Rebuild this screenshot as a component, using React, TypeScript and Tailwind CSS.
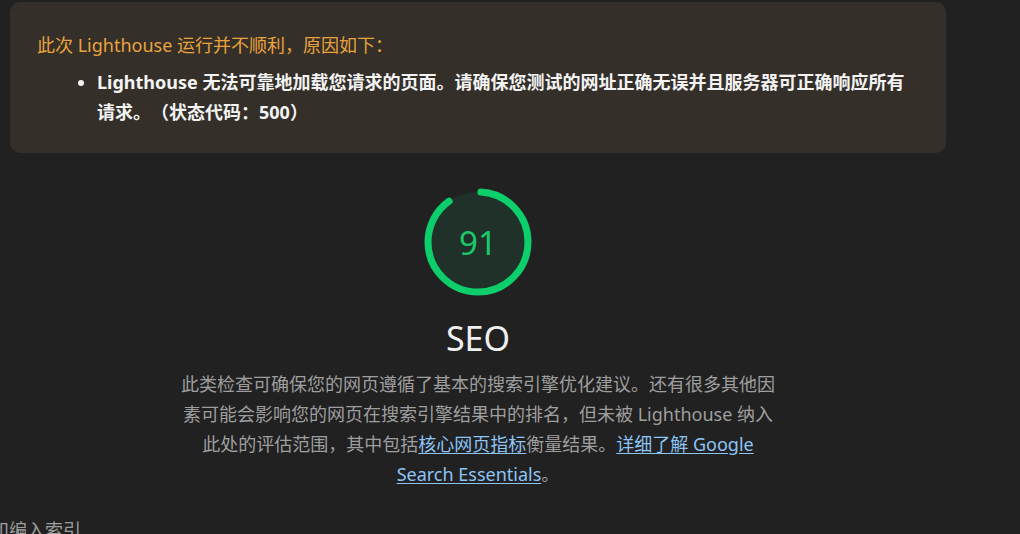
import React from 'react';

const FONT = '"Noto Sans", "Noto Sans CJK SC", sans-serif';

function ScoreGauge({ score }: { score: number }) {
  const r = 50;
  const circ = 2 * Math.PI * r;
  const len = (score / 100) * circ;
  return (
    <svg width="108" height="108" viewBox="0 0 108 108" className="block">
      <circle cx="54" cy="54" r={r} fill="#1f3129" stroke="none" />
      <circle
        cx="54"
        cy="54"
        r={r}
        fill="none"
        stroke="#0ccf6b"
        strokeWidth="7"
        strokeLinecap="round"
        strokeDasharray={`${len - 6} ${circ}`}
        strokeDashoffset={-3}
        transform="rotate(-90 54 54)"
      />
      <text
        x="54"
        y="54"
        textAnchor="middle"
        dominantBaseline="central"
        fill="#1cc86a"
        fontSize="33"
        style={{ fontFamily: FONT }}
      >
        {score}
      </text>
    </svg>
  );
}

export default function App() {
  return (
    <div
      className="w-[1020px] h-[534px] overflow-hidden bg-[#212121] text-[18px] leading-[30px] [text-spacing-trim:space-all]"
      style={{ fontFamily: FONT }}
    >
      <div className="w-[956px] flex flex-col items-center">
        {/* warning card */}
        <div className="mt-[2px] w-[936px] h-[151px] rounded-[10px] bg-[#342f29] pl-[27px] pt-[28px]">
          <div className="text-[#eaa33c]">此次 Lighthouse 运行并不顺利，原因如下：</div>
          <ul className="mt-[7px] list-disc pl-[60px] text-[#f3f3f3] font-bold">
            <li className="pr-[30px]">
              Lighthouse 无法可靠地加载您请求的页面。请确保您测试的网址正确无误并且服务器可正确响应所有请求。（状态代码：500）
            </li>
          </ul>
        </div>

        {/* gauge */}
        <div className="mt-[35px]">
          <ScoreGauge score={91} />
        </div>
        <div className="mt-[20px] text-[34px] leading-[44px] text-[#f0f0f0]">SEO</div>
        <p className="mt-[9px] w-[600px] text-center text-[#9e9e9e]">
          此类检查可确保您的网页遵循了基本的搜索引擎优化建议。还有很多其他因素可能会影响您的网页在搜索引擎结果中的排名，但未被 Lighthouse 纳入此处的评估范围，其中包括
          <a className="text-[#8cc4f6] underline underline-offset-2">核心网页指标</a>
          衡量结果。
          <a className="text-[#8cc4f6] underline underline-offset-2">详细了解 Google Search Essentials</a>。
        </p>
      </div>
      <div className="mt-[26px] -ml-[9px] text-[#9e9e9e] whitespace-nowrap">和编入索引</div>
    </div>
  );
}
